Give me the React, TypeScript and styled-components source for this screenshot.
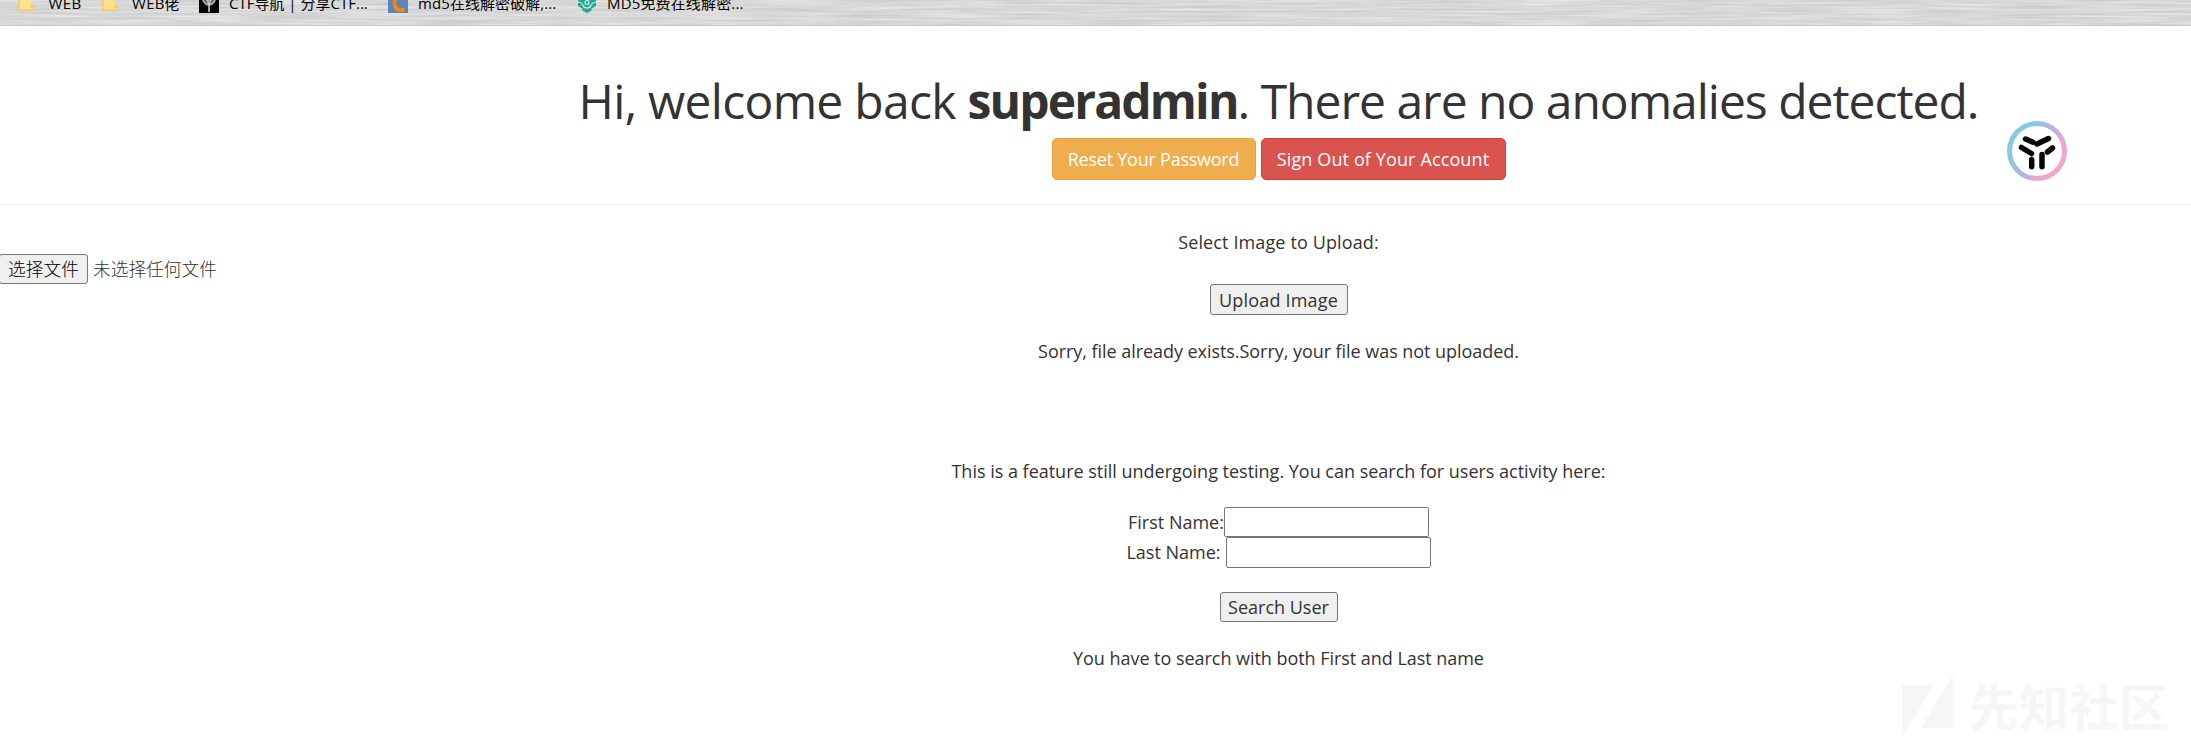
import React from 'react';
import styled, { createGlobalStyle } from 'styled-components';

const GlobalStyle = createGlobalStyle`
  * { box-sizing: border-box; }
  body {
    margin: 0;
    background: #fff;
    color: #333;
    font: 18px/25px "Open Sans", "Noto Sans CJK SC", sans-serif;
    overflow: hidden;
  }
`;

const Window = styled.div`
  position: relative;
  width: 100%;
  height: 744px;
  overflow: hidden;
`;

const BookmarksBar = styled.nav`
  position: relative;
  height: 26px;
  background: #dadada;
  border-bottom: 1px solid #c9c9c9;
  overflow: hidden;
`;

const Brushed = styled.svg`
  position: absolute;
  inset: 0;
  width: 100%;
  height: 100%;
`;

const BookmarkList = styled.div`
  position: relative;
  display: flex;
  align-items: flex-start;
  margin-top: -7px;
  padding-left: 17px;
`;

const Bookmark = styled.a<{ $width: number; $tracking?: number }>`
  display: flex;
  flex: none;
  align-items: flex-start;
  gap: 10px;
  width: ${(p) => p.$width}px;
  color: #000;
  font-size: 15px;
  line-height: 20px;
  letter-spacing: ${(p) => p.$tracking ?? 0}px;
  white-space: pre;
  svg { flex: none; }
`;

const Page = styled.main`
  display: flex;
  flex-direction: column;
  align-items: center;
  width: 2557px;
`;

const Header = styled.header`
  display: flex;
  flex-direction: column;
  align-items: center;
  width: 100%;
  height: 179px;
  padding-top: 48px;
  border-bottom: 1px solid #eee;
`;

const Title = styled.h1`
  margin: 0 0 11px;
  font-size: 48px;
  font-weight: 400;
  line-height: 53px;
  white-space: pre;
`;

const Tracked = styled.span<{ $tracking: number }>`
  letter-spacing: ${(p) => p.$tracking}px;
`;

const UserName = styled.b`
  font-weight: 700;
  letter-spacing: -1.85px;
`;

const Actions = styled.div`
  display: flex;
  gap: 5px;
`;

const ActionLink = styled.a<{ $tone: 'warning' | 'danger' }>`
  display: flex;
  align-items: center;
  justify-content: center;
  width: ${(p) => (p.$tone === 'warning' ? 204 : 245)}px;
  height: 42px;
  color: #fff;
  background: ${(p) => (p.$tone === 'warning' ? '#f0ad4e' : '#d9534f')};
  border: 1px solid ${(p) => (p.$tone === 'warning' ? '#eea236' : '#d43f3a')};
  border-radius: 5px;
  letter-spacing: ${(p) => (p.$tone === 'warning' ? -0.24 : 0.12)}px;
  white-space: nowrap;
`;

const Form = styled.form`
  display: flex;
  flex-direction: column;
  align-items: center;
  width: 100%;
`;

const Text = styled.p<{ $top: number; $tracking?: number }>`
  margin: ${(p) => p.$top}px 0 0;
  letter-spacing: ${(p) => p.$tracking ?? 0}px;
  white-space: nowrap;
`;

const NativeButton = styled.button`
  display: flex;
  align-items: center;
  justify-content: center;
  flex: none;
  padding: 0;
  color: #333;
  background: #efefef;
  border: 1px solid #767676;
  border-radius: 3px;
  font: inherit;
  white-space: nowrap;
`;

const ChooseButton = styled(NativeButton)`
  width: 89px;
  height: 30px;
  margin-left: -1px;
  padding-bottom: 1px;
  color: #000;
`;

const UploadButton = styled(NativeButton)`
  width: 138px;
  height: 31px;
  padding-top: 1px;
  letter-spacing: 0.2px;
`;

const SearchButton = styled(NativeButton)`
  width: 118px;
  height: 30px;
  margin-top: 24px;
`;

const FilePicker = styled.div`
  display: flex;
  align-items: center;
  align-self: flex-start;
  gap: 5px;
  height: 30px;
  margin-top: -1px;
  font-family: "Noto Sans CJK SC", sans-serif;
  font-size: 17.7px;
  font-weight: 300;
`;

const FileName = styled.span`
  padding-bottom: 2px;
`;

const Field = styled.label<{ $gap: number; $height: number }>`
  display: flex;
  align-items: center;
  gap: ${(p) => p.$gap}px;
  height: ${(p) => p.$height}px;
  white-space: nowrap;
`;

const FieldGroup = styled.div`
  display: flex;
  flex-direction: column;
  align-items: center;
  margin-top: 23px;
`;

const Input = styled.input`
  width: 205px;
  height: 100%;
  padding: 1px 2px;
  background: #fff;
  border: 1px solid #767676;
  border-radius: 2px;
  font: inherit;
`;

const Assistant = styled.svg`
  position: absolute;
  left: 2007px;
  top: 121px;
  width: 60px;
  height: 60px;
`;

const Watermark = styled.div`
  position: absolute;
  left: 1902px;
  top: 674px;
  display: flex;
  align-items: flex-start;
  gap: 15px;
  color: #f6f6f6;
  font: 700 50px/61px "Noto Sans CJK SC", sans-serif;
  white-space: nowrap;
`;

const Folder = () => (
  <svg width="17" height="18" viewBox="0 0 17 18">
    <path d="M2 0h12v12l2 1v4H2z" fill="#fbe292" />
    <path d="M2 .5v16.700h14V13.500c-.6-1.400-2.200-1-2.200.4v1.200" fill="none" stroke="#f6ca4f" strokeWidth="1.300" />
  </svg>
);

const Tree = () => (
  <svg width="20" height="20" viewBox="0 0 20 20">
    <path d="M0 0h20v20H0z" fill="#050505" />
    <path d="M3 3h14c1 5-2 9-6 10v6H9v-6C5 12 2 8 3 3z" fill="#8d8984" />
    <path d="M5 5l5 7 5-7M4 8l6 4 6-4M7 4l3 8 3-8M10 3v16" fill="none" stroke="#d2cec8" strokeWidth=".8" />
    <path d="M6 7l2 3M14 7l-2 3" stroke="#333" />
  </svg>
);

const CLogo = () => (
  <svg width="20" height="20" viewBox="0 0 20 20">
    <path d="M0 0h20v20H0z" fill="#5c85b9" />
    <path d="M16 3.500C10 1 6.500 5 6.500 10s2.500 7 6 7H16.500" fill="none" stroke="#ff8306" strokeWidth="3.800" />
  </svg>
);

const Shield = () => (
  <svg width="20" height="20" viewBox="0 0 20 20">
    <path d="M1 1h18v11c0 3-5 6-9 8-4-2-9-5-9-8z" fill="#23a991" />
    <path d="M0 9c4 0 5 1 6 3.500s2 2.500 4 2.500 3 0 4-2.500 2-3.500 6-3.500M1.500 14l4 2.500M18.500 14l-4 2.500" fill="none" stroke="#dceee9" strokeWidth="1.200" />
    <circle cx="10" cy="9.500" r="2" fill="none" stroke="#dceee9" strokeWidth="1.200" />
  </svg>
);

export default function App() {
  return (
    <Window>
      <GlobalStyle />
      <BookmarksBar>
        <Brushed aria-hidden="true">
          <filter id="grain" x="0" y="0" width="100%" height="100%" colorInterpolationFilters="sRGB">
            <feTurbulence type="fractalNoise" baseFrequency="0.012 0.45" numOctaves="3" seed="4" />
            <feColorMatrix values="0.16 0 0 0 0.77  0.16 0 0 0 0.77  0.16 0 0 0 0.77  0 0 0 0 1" />
          </filter>
          <rect width="100%" height="100%" filter="url(#grain)" />
        </Brushed>
        <BookmarkList>
          <Bookmark $width={84} $tracking={0.5}><Folder /><span> WEB</span></Bookmark>
          <Bookmark $width={98} $tracking={0.2}><Folder /><span> WEB佬</span></Bookmark>
          <Bookmark $width={189}><Tree /><span>CTF导航 | 分享CTF...</span></Bookmark>
          <Bookmark $width={189} $tracking={0.08}><CLogo /><span>md5在线解密破解,...</span></Bookmark>
          <Bookmark $width={190} $tracking={0.15}><Shield /><span>MD5免费在线解密...</span></Bookmark>
        </BookmarkList>
      </BookmarksBar>
      <Page>
        <Header>
          <Title>
            <Tracked $tracking={-0.72}>Hi, welcome back </Tracked>
            <UserName>superadmin</UserName>
            <Tracked $tracking={-1.02}>. There are no anomalies detected.</Tracked>
          </Title>
          <Actions>
            <ActionLink $tone="warning">Reset Your Password</ActionLink>
            <ActionLink $tone="danger">Sign Out of Your Account</ActionLink>
          </Actions>
        </Header>
        <Form>
          <Text $top={25} $tracking={0.12}>Select Image to Upload:</Text>
          <FilePicker>
            <ChooseButton type="button">选择文件</ChooseButton>
            <FileName>未选择任何文件</FileName>
          </FilePicker>
          <UploadButton type="button">Upload Image</UploadButton>
          <Text $top={24} $tracking={-0.05}>Sorry, file already exists.Sorry, your file was not uploaded.</Text>
        </Form>
        <Form>
          <Text $top={95} $tracking={-0.01}>This is a feature still undergoing testing. You can search for users activity here:</Text>
          <FieldGroup>
            <Field $gap={0} $height={30}>First Name:<Input /></Field>
            <Field $gap={5} $height={31}>Last Name:<Input /></Field>
          </FieldGroup>
          <SearchButton type="button">Search User</SearchButton>
          <Text $top={24} $tracking={-0.04}>You have to search with both First and Last name</Text>
        </Form>
      </Page>
      <Assistant viewBox="0 0 60 60">
        <defs>
          <linearGradient id="ring" x1="0" y1="0.2" x2="1" y2="0.8">
            <stop offset="0.2" stopColor="#82cce1" />
            <stop offset="0.5" stopColor="#b5b3e6" />
            <stop offset="0.8" stopColor="#f0a5cc" />
          </linearGradient>
        </defs>
        <circle cx="30" cy="30" r="27.500" fill="#fff" stroke="url(#ring)" strokeWidth="5" />
        <g stroke="#050508" strokeWidth="5.500" strokeLinecap="round" fill="none">
          <path d="M18.500 18l7.500 3.200M30 23l11.500-5.500M14.500 26.500l10 6M40.500 31l5-4" />
          <path d="M24.700 38.500v7.200M35 33.500v12.200" />
        </g>
      </Assistant>
      <Watermark>
        <svg width="52" height="64" viewBox="0 0 52 64">
          <path d="M0 11h32L0 63zM51 0v54H19z" fill="#f6f6f6" />
        </svg>
        <span>先知社区</span>
      </Watermark>
    </Window>
  );
}
